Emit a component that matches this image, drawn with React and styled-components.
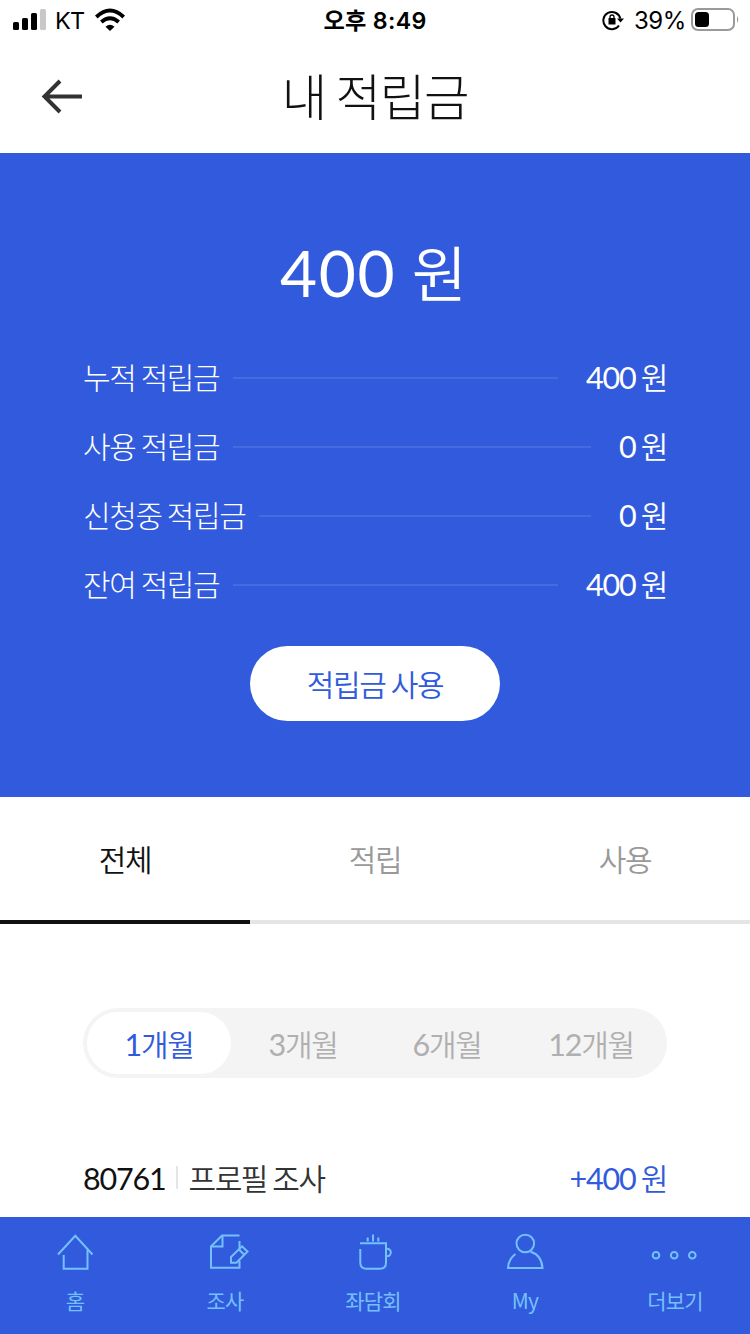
import React from 'react';
import { useState } from 'react';
import styled, { createGlobalStyle } from 'styled-components';

const GlobalStyle = createGlobalStyle`
  * {
    box-sizing: border-box;
  }
  body {
    margin: 0;
    background: #fff;
    font-family: 'Noto Sans CJK KR', sans-serif;
    font-weight: 350;
  }
  button {
    border: 0;
    padding: 0;
    background: none;
    font-family: inherit;
    font-weight: inherit;
  }
`;

const Screen = styled.div`
  width: 750px;
  height: 1334px;
  display: flex;
  flex-direction: column;
  overflow: hidden;
  background: #fff;
`;

const StatusBar = styled.div`
  height: 40px;
  flex: none;
  display: grid;
  grid-template-columns: 1fr auto 1fr;
  align-items: center;
  padding: 0 11px 0 13px;
  font-family: Inter, 'Noto Sans CJK KR', sans-serif;
  font-size: 24px;
  font-weight: 400;
  line-height: 38px;
  color: #000;
`;

const StatusSide = styled.div`
  display: flex;
  align-items: center;
  justify-content: ${({ $end }) => ($end ? 'flex-end' : 'flex-start')};
`;

const Carrier = styled.span`
  margin: 0 10px 0 8px;
  padding-top: 2px;
  font-size: 23.5px;
  letter-spacing: -0.7px;
`;

const Clock = styled.span`
  padding: 2px 2px 0 0;
  font-weight: 600;
  font-size: 23.2px;
  letter-spacing: 0.3px;
`;

const Percent = styled.span`
  margin: 0 5px 0 10px;
  padding-top: 2px;
  letter-spacing: -0.4px;
`;

const TitleBar = styled.header`
  height: 113px;
  flex: none;
  display: grid;
  grid-template-columns: 1fr auto 1fr;
  align-items: center;
  padding: 0 41px;
`;

const BackButton = styled.button`
  display: flex;
  width: 42px;
  height: 36px;
`;

const Title = styled.h1`
  margin: 0;
  padding-bottom: 4px;
  font-size: 49.5px;
  font-weight: 300;
  letter-spacing: -1.3px;
  line-height: 109px;
  color: #111;
`;

const Summary = styled.section`
  height: 644px;
  flex: none;
  display: flex;
  flex-direction: column;
  align-items: center;
  padding: 73px 83px 0;
  background: #315bdc;
  color: #fff;
`;

const Total = styled.p`
  margin: 0;
  height: 92px;
  padding-right: 3px;
  font-size: 60px;
  line-height: 89px;
  word-spacing: 2px;
`;

const Num = styled.span`
  font-family: Lato, sans-serif;
  font-weight: 400;
  font-size: ${({ $big }) => ($big ? '64px' : '30.5px')};
  letter-spacing: ${({ $big }) => ($big ? '1.6px' : '-1.2px')};
  line-height: 1;
`;

const Balances = styled.dl`
  width: 100%;
  margin: 25px 0 0;
`;

const Balance = styled.div`
  display: flex;
  align-items: center;
  height: 69px;
  line-height: 67px;
  font-size: 30px;
  letter-spacing: -1.4px;
`;

const BalanceName = styled.dt`
  padding-bottom: 2px;
  font-weight: 300;
`;

const Rule = styled.span`
  flex: 1;
  height: 2px;
  margin: 0 28px 0 14px;
  background: #466bdf;
`;

const BalanceValue = styled.dd`
  margin: 0;
  padding-bottom: 2px;
`;

const UseButton = styled.button`
  width: 250px;
  height: 75px;
  margin-top: 27px;
  border-radius: 38px;
  background: #fff;
  color: #315bdc;
  font-size: 30px;
  letter-spacing: -1.4px;
  line-height: 75px;
`;

const Tabs = styled.nav`
  display: grid;
  grid-template-columns: repeat(3, 1fr);
  height: 127px;
  flex: none;
`;

const Tab = styled.button`
  border-bottom: 4px solid ${({ $active }) => ($active ? '#111' : '#e5e5e5')};
  color: ${({ $active }) => ($active ? '#111' : '#999')};
  font-size: 30px;
  letter-spacing: -1.4px;
  line-height: 123px;
`;

const Periods = styled.div`
  display: grid;
  grid-template-columns: repeat(4, 1fr);
  flex: none;
  height: 70px;
  margin: 84px 83px 0;
  padding: 4px;
  border-radius: 35px;
  background: #f4f4f4;
`;

const Period = styled.button`
  border-radius: 31px;
  background: ${({ $active }) => ($active ? '#fff' : 'transparent')};
  color: ${({ $active }) => ($active ? '#315bdc' : '#b0b0b0')};
  font-size: 30px;
  letter-spacing: -1.4px;
  line-height: 62px;
`;

const History = styled.main`
  flex: 1;
  padding: 65px 83px 0;
`;

const HistoryRow = styled.div`
  display: flex;
  align-items: center;
  height: 69px;
  line-height: 69px;
  font-size: 30px;
  letter-spacing: -1.4px;
`;

const Code = styled.span`
  color: #111;
`;

const Divider = styled.span`
  width: 2px;
  height: 23px;
  margin: 0 10px 0 11px;
  background: #e5e5e5;
`;

const Name = styled.span`
  color: #333;
`;

const Amount = styled.span`
  margin-left: auto;
  color: #315bdc;
`;

const BottomNav = styled.nav`
  display: grid;
  grid-template-columns: repeat(5, 1fr);
  flex: none;
  height: 117px;
  background: #315bdc;
`;

const NavItem = styled.a`
  display: flex;
  flex-direction: column;
  align-items: center;
  padding: 14px ${({ $nudge }) => $nudge || 0}px 0 0;
  color: #74c0fb;
  font-size: 21px;
  font-weight: 400;
  letter-spacing: -0.8px;
  line-height: 30px;
`;

const NavIcon = styled.svg`
  width: 44px;
  height: 44px;
  margin-bottom: 10px;
  fill: none;
  stroke: currentColor;
  stroke-width: 2;
`;

const balances = [
  { name: '누적 적립금', value: 400 },
  { name: '사용 적립금', value: 0 },
  { name: '신청중 적립금', value: 0 },
  { name: '잔여 적립금', value: 400 },
];

const tabs = ['전체', '적립', '사용'];
const periods = [1, 3, 6, 12];

const navItems = [
  {
    label: '홈',
    icon: (
      <>
        <path d="M5 23.500 L22.300 4.800 L39.500 23.500" />
        <path d="M10.700 24 V37.700 H34.500 V19" />
      </>
    ),
  },
  {
    label: '조사',
    icon: (
      <>
        <path d="M36.500 4.500 H19 L8 15.500 V36.800 H36.500 V30" />
        <path d="M19.500 4.500 V15.500 H8 M36.500 10 V18" />
        <path d="M28 26 L39 15.300 L44.500 20.500 L33.500 31.700 H28 Z M36 18.500 L41 23.500" />
      </>
    ),
  },
  {
    label: '좌담회',
    nudge: 4,
    icon: (
      <>
        <path d="M9 12.300 H35 V31.500 Q35 37.800 29 37.800 H15.500 Q9.300 37.800 9.300 31.500 V18" />
        <path d="M35 17.700 H36 A3.800 3.800 0 0 1 36 25.300 H35" />
        <path d="M16.700 6.500 V10.500 M22 3.500 V10.500 M27.300 6.500 V10.500" />
      </>
    ),
  },
  {
    label: 'My',
    icon: (
      <>
        <circle cx="22.300" cy="12.500" r="8.800" />
        <path d="M12.500 23 Q5.500 28 5 37 H39.500 Q38.500 24 27.500 20.800" />
      </>
    ),
  },
  {
    label: '더보기',
    icon: (
      <>
        <circle cx="3" cy="24.300" r="3.300" />
        <circle cx="21.200" cy="24.300" r="3.300" />
        <circle cx="39.300" cy="24.300" r="3.300" />
      </>
    ),
  },
];

const Signal = () => (
  <svg width="34" height="24" viewBox="0 0 34 24">
    <rect x="0" y="14" width="6" height="8" rx="1.5" />
    <rect x="9" y="10" width="6" height="12" rx="1.5" />
    <rect x="18" y="5" width="6" height="17" rx="1.5" />
    <rect x="27" y="1" width="6" height="21" rx="1.5" fill="#c8c8c8" />
  </svg>
);

const Wifi = () => (
  <svg width="30" height="24" viewBox="0 0 30 24" fill="none" stroke="#000" strokeWidth="3.800">
    <path d="M1.300 9 Q15 -3.800 28.700 9" />
    <path d="M6.300 14 Q15 6.500 23.700 14" />
    <path d="M15 23 L10.500 18.700 Q15 14.800 19.500 18.700 Z" fill="#000" stroke="none" />
  </svg>
);

const RotationLock = () => (
  <svg width="22" height="22" viewBox="0 0 22 22">
    <path d="M17 16.500 A8.600 8.600 0 1 1 18.300 9.500" fill="none" stroke="#000" strokeWidth="2" />
    <path d="M15 9.500 H22 L18.500 13.500 Z" />
    <rect x="6.500" y="9" width="7" height="6.500" rx="0.500" />
    <path d="M8 9.500 V8 A2 2 0 0 1 12 8 V9.500" fill="none" stroke="#000" strokeWidth="1.300" />
  </svg>
);

const Battery = () => (
  <svg width="48" height="24" viewBox="0 0 48 24">
    <rect x="1" y="1" width="42" height="21" rx="6" fill="none" stroke="#9a9a9a" strokeWidth="2" />
    <rect x="4" y="4" width="14" height="15" rx="3.500" />
    <path d="M46 8 Q48.500 11.500 46 15 Z" fill="#9a9a9a" />
  </svg>
);

const App = () => {
  const [tab, setTab] = useState('전체');
  const [period, setPeriod] = useState(1);

  return (
    <Screen>
      <GlobalStyle />
      <StatusBar>
        <StatusSide>
          <Signal />
          <Carrier>KT</Carrier>
          <Wifi />
        </StatusSide>
        <Clock>오후 8:49</Clock>
        <StatusSide $end>
          <RotationLock />
          <Percent>39%</Percent>
          <Battery />
        </StatusSide>
      </StatusBar>

      <TitleBar>
        <BackButton aria-label="뒤로">
          <svg width="42" height="36" viewBox="0 0 42 36" fill="none" stroke="#333" strokeWidth="4">
            <path d="M41 17.500 H4 M19 2 L3.500 17.500 L19 33" />
          </svg>
        </BackButton>
        <Title>내 적립금</Title>
      </TitleBar>

      <Summary>
        <Total><Num $big>400</Num> 원</Total>
        <Balances>
          {balances.map(({ name, value }) => (
            <Balance key={name}>
              <BalanceName>{name}</BalanceName>
              <Rule />
              <BalanceValue><Num>{value}</Num> 원</BalanceValue>
            </Balance>
          ))}
        </Balances>
        <UseButton>적립금 사용</UseButton>
      </Summary>

      <Tabs>
        {tabs.map((name) => (
          <Tab key={name} $active={name === tab} onClick={() => setTab(name)}>{name}</Tab>
        ))}
      </Tabs>

      <Periods>
        {periods.map((months) => (
          <Period key={months} $active={months === period} onClick={() => setPeriod(months)}>
            <Num>{months}</Num>개월
          </Period>
        ))}
      </Periods>

      <History>
        <HistoryRow>
          <Code><Num>80761</Num></Code>
          <Divider />
          <Name>프로필 조사</Name>
          <Amount><Num>+400</Num> 원</Amount>
        </HistoryRow>
      </History>

      <BottomNav>
        {navItems.map(({ label, icon, nudge }) => (
          <NavItem key={label} $nudge={nudge}>
            <NavIcon viewBox="0 0 44 44" overflow="visible">{icon}</NavIcon>
            {label}
          </NavItem>
        ))}
      </BottomNav>
    </Screen>
  );
};

export default App;
